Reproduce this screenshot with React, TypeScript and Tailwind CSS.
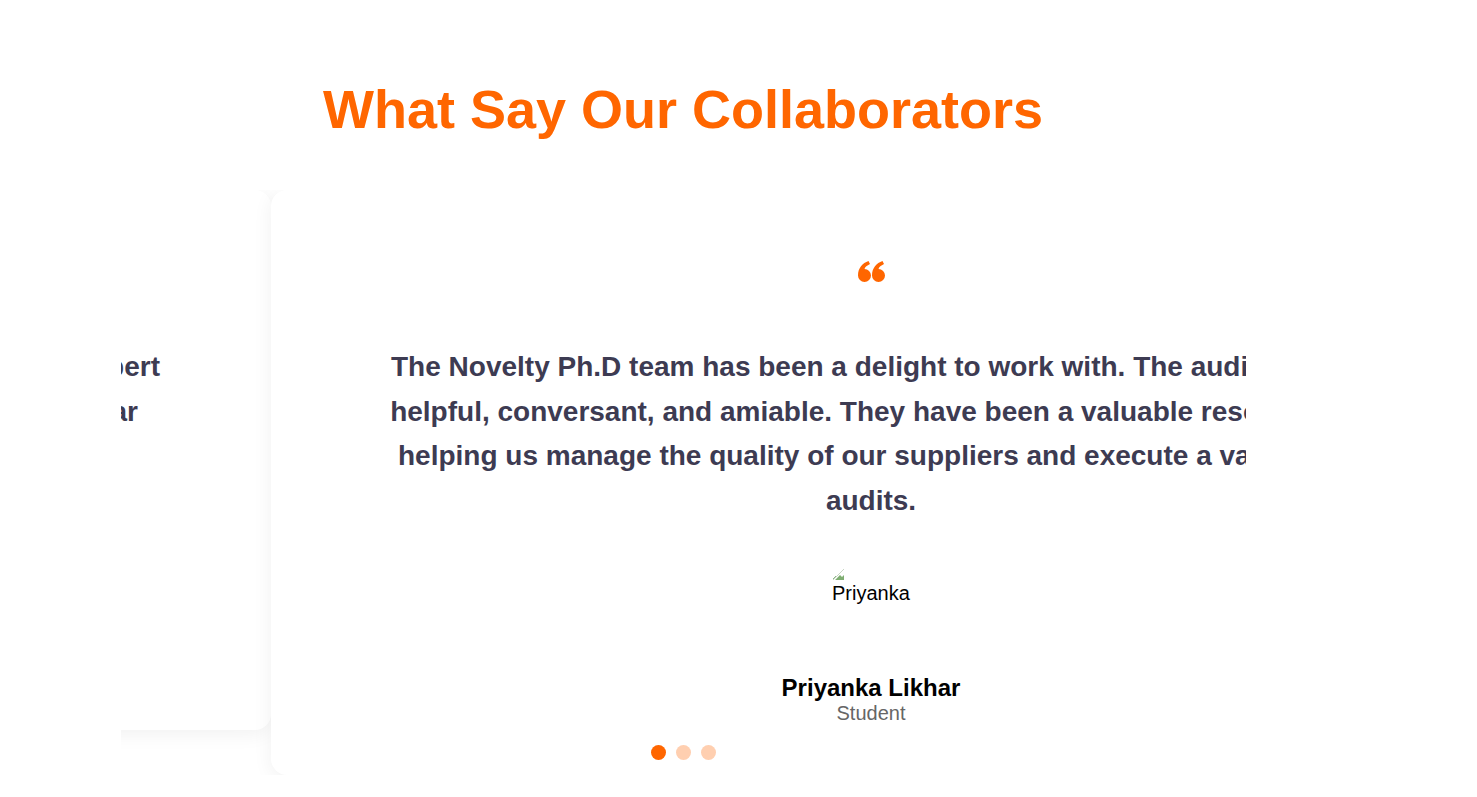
function QuoteMark() {
  const tail = "M0 14.5C0 7 4.5 2 10.5 0L12 3C9 4.5 7 6 6.5 8A6.5 6.5 0 1 1 0 14.5Z";
  return (
    <svg width="27" height="21" viewBox="0 0 27 21" fill="#ff6600" className="block">
      <path d={tail} />
      <path d={tail} transform="translate(14 0)" />
    </svg>
  );
}

function BrokenImage() {
  return (
    <svg width="16" height="16" viewBox="0 0 16 16" className="block">
      <path d="M1 14 L12 3" stroke="#c9d6c4" strokeWidth="1" fill="none" />
      <path d="M3 14 L8 9 L10 11 L12 9 L12 14 Z" fill="#7fae72" />
      <path d="M1 13 L4 10" stroke="#8fb98a" strokeWidth="1" fill="none" />
    </svg>
  );
}

export default function App() {
  return (
    <div className="h-[797px] overflow-hidden bg-white font-['Liberation_Sans',Arial,sans-serif]">
      <div className="pl-[323px] pt-[72px] h-[190px]">
        <h2 className="text-[54px] leading-[74px] font-bold text-[#ff6600]">What Say Our Collaborators</h2>
      </div>

      {/* carousel window, neighbours are clipped by it */}
      <div className="relative ml-[121px] w-[1125px] h-[585px] overflow-hidden">
        <div className="flex items-start -ml-[1050px] w-[2400px]">
          <div className="w-[1200px] h-[540px] pt-[155px] pr-[111px] shrink-0 rounded-2xl bg-white shadow-[0_4px_20px_rgba(0,0,0,0.06)]">
            <div className="text-[28px] leading-[44.8px] font-bold text-[#3d3b52] whitespace-nowrap flex flex-col items-end">
              <p>Robert</p>
              <p className="mr-[22px]">Sardar</p>
            </div>
          </div>

          <div className="relative w-[1200px] h-[585px] shrink-0 rounded-2xl bg-white shadow-[0_4px_20px_rgba(0,0,0,0.06)] flex flex-col items-center pt-[71px]">
            <QuoteMark />
            <p className="mt-[62.8px] w-[984px] text-center text-[28px] leading-[44.8px] font-bold text-[#3d3b52]">
              The Novelty Ph.D team has been a delight to work with. The auditors are helpful, conversant, and amiable. They have been a valuable resource in helping us manage the quality of our suppliers and execute a variety of audits.
            </p>
            <div className="mt-[42.2px] w-[78px] whitespace-nowrap text-[20px] leading-[23px] text-black">
              <BrokenImage />
              <span>Priyanka</span>
            </div>
            <p className="mt-[69px] text-[24px] leading-[28px] font-bold text-black">Priyanka Likhar</p>
            <p className="text-[20px] leading-[23px] text-[#666666]">Student</p>
          </div>
        </div>

        <div className="absolute left-[530px] top-[555px] flex gap-[10px]">
          <span className="w-[15px] h-[15px] rounded-full bg-[#ff6600]" />
          <span className="w-[15px] h-[15px] rounded-full bg-[#ffcfb0]" />
          <span className="w-[15px] h-[15px] rounded-full bg-[#ffcfb0]" />
        </div>
      </div>
    </div>
  );
}
